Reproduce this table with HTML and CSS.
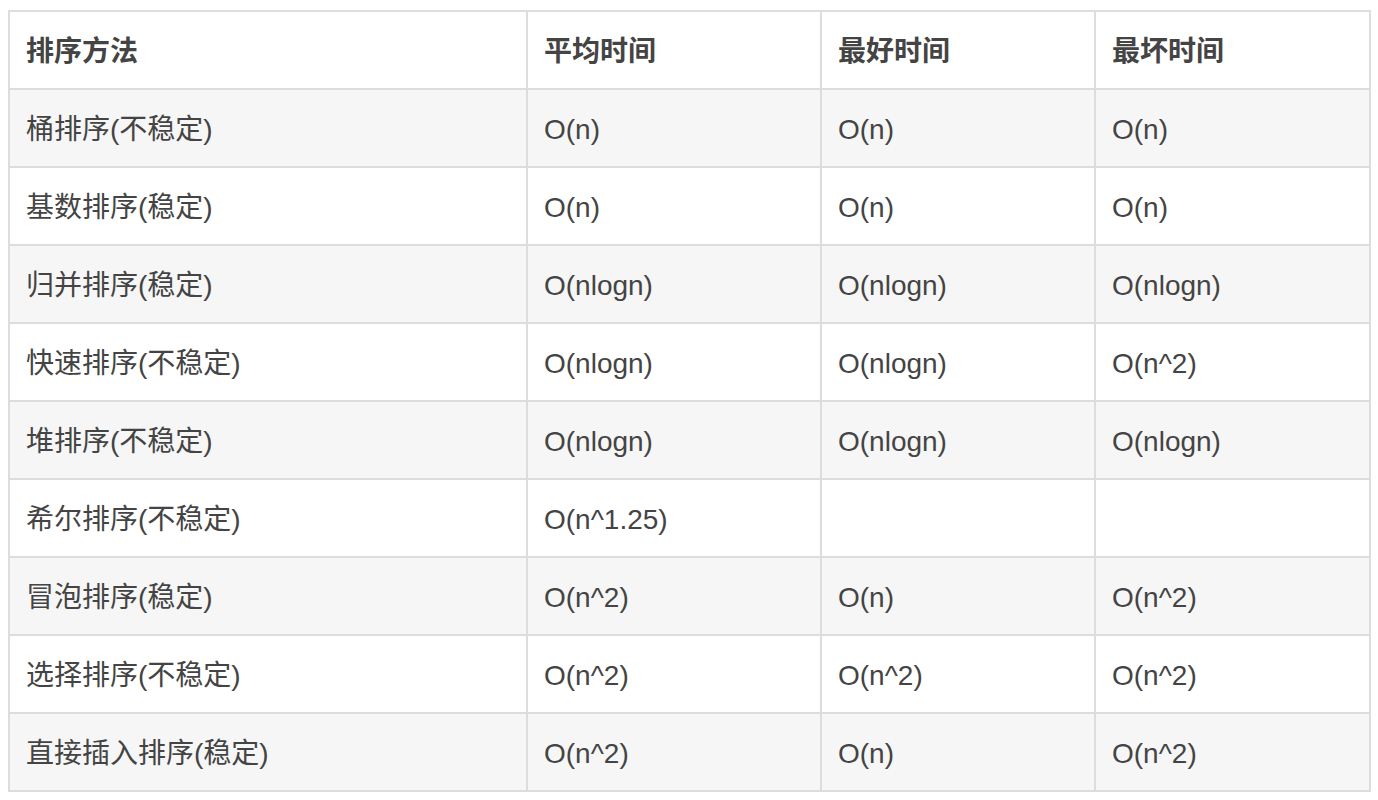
FILE: index.html
```html
<!DOCTYPE html>
<html lang="zh">
<head>
<meta charset="utf-8">
<title>排序方法</title>
<link rel="stylesheet" href="styles.css">
</head>
<body>
<table class="sort-table">
  <colgroup>
    <col class="c1"><col class="c2"><col class="c3"><col class="c4">
  </colgroup>
  <thead>
    <tr><th>排序方法</th><th>平均时间</th><th>最好时间</th><th>最坏时间</th></tr>
  </thead>
  <tbody>
    <tr><td>桶排序(不稳定)</td><td>O(n)</td><td>O(n)</td><td>O(n)</td></tr>
    <tr><td>基数排序(稳定)</td><td>O(n)</td><td>O(n)</td><td>O(n)</td></tr>
    <tr><td>归并排序(稳定)</td><td>O(nlogn)</td><td>O(nlogn)</td><td>O(nlogn)</td></tr>
    <tr><td>快速排序(不稳定)</td><td>O(nlogn)</td><td>O(nlogn)</td><td>O(n^2)</td></tr>
    <tr><td>堆排序(不稳定)</td><td>O(nlogn)</td><td>O(nlogn)</td><td>O(nlogn)</td></tr>
    <tr><td>希尔排序(不稳定)</td><td>O(n^1.25)</td><td></td><td></td></tr>
    <tr><td>冒泡排序(稳定)</td><td>O(n^2)</td><td>O(n)</td><td>O(n^2)</td></tr>
    <tr><td>选择排序(不稳定)</td><td>O(n^2)</td><td>O(n^2)</td><td>O(n^2)</td></tr>
    <tr><td>直接插入排序(稳定)</td><td>O(n^2)</td><td>O(n)</td><td>O(n^2)</td></tr>
  </tbody>
</table>
</body>
</html>
```

FILE: styles.css
```css
html, body {
  margin: 0;
  padding: 0;
  background: #ffffff;
}
body {
  padding: 10px 8px 0 8px;
  font-family: "Liberation Sans", "Noto Sans CJK SC", sans-serif;
  color: #444444;
}
.sort-table {
  border-collapse: collapse;
  width: 1361px;
  table-layout: fixed;
  font-size: 28px;
}
.c1 { width: 518px; }
.c2 { width: 294px; }
.c3 { width: 274px; }
.c4 { width: 275px; }
.sort-table th,
.sort-table td {
  border: 2px solid #dddddd;
  height: 78px;
  padding: 3px 16px 0 16px;
  box-sizing: border-box;
  text-align: left;
  vertical-align: middle;
  line-height: 36px;
}
.sort-table th {
  font-weight: bold;
  color: #444444;
}
.sort-table tbody tr:nth-child(odd) {
  background: #f6f6f6;
}
.sort-table tbody tr:nth-child(even) {
  background: #ffffff;
}
```
